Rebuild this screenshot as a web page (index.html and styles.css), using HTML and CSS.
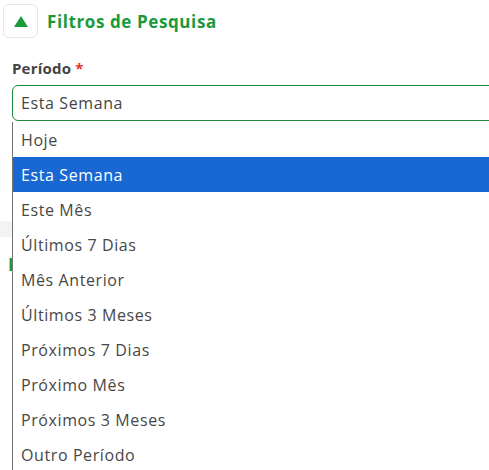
FILE: index.html
```html
<!DOCTYPE html>
<html lang="pt">
<head>
<meta charset="utf-8">
<link rel="stylesheet" href="styles.css">
</head>
<body>
<div class="page">
  <div class="header">
    <button class="toggle" type="button">
      <svg width="14" height="11" viewBox="0 0 14 11"><polygon points="7,0 14,11 0,11" fill="#1b9a3c"/></svg>
    </button>
    <h2 class="title">Filtros de Pesquisa</h2>
  </div>
  <div class="field">
    <label class="label">Período <span class="req">*</span></label>
    <div class="select-wrap">
      <div class="select">Esta Semana</div>
      <ul class="menu">
        <li>Hoje</li>
        <li class="active">Esta Semana</li>
        <li>Este Mês</li>
        <li>Últimos 7 Dias</li>
        <li>Mês Anterior</li>
        <li>Últimos 3 Meses</li>
        <li>Próximos 7 Dias</li>
        <li>Próximo Mês</li>
        <li>Próximos 3 Meses</li>
        <li>Outro Período</li>
      </ul>
    </div>
  </div>
  <div class="band"></div>
  <h2 class="results">Resultados</h2>
</div>
</body>
</html>
```
FILE: styles.css
```css
html {
  overflow: hidden;
}
html, body {
  margin: 0;
  padding: 0;
  background: #fff;
}
body {
  font-family: "Open Sans", "DejaVu Sans", sans-serif;
  color: #444;
  min-height: 470px;
}
.page {
  width: 540px;
  padding-top: 4px;
}
.header {
  display: flex;
  align-items: center;
  gap: 9px;
  padding-left: 3px;
}
.toggle {
  width: 35px;
  height: 34px;
  border: 1px solid #e6e6e6;
  border-radius: 6px;
  background: #fff;
  display: flex;
  align-items: center;
  justify-content: center;
  padding: 0;
  margin: 0;
}
.title {
  margin: 0;
  font-size: 17px;
  font-weight: 700;
  letter-spacing: 0.6px;
  color: #1b9a3c;
}
.field {
  padding-left: 12px;
  margin-top: 20px;
}
.label {
  display: block;
  font-size: 15px;
  font-weight: 700;
  color: #444;
  height: 27px;
  letter-spacing: 0.2px;
}
.req {
  color: #e8342a;
}
.select-wrap {
  position: relative;
}
.select {
  height: 34px;
  border: 1px solid #1f8a3a;
  border-radius: 6px;
  padding-left: 8px;
  font-size: 16px;
  letter-spacing: 0.6px;
  line-height: 34px;
  color: #444;
}
.menu {
  position: absolute;
  left: 0;
  top: 37px;
  right: 0;
  margin: 0;
  padding: 0;
  list-style: none;
  background: #fff;
  border-left: 1px solid #767676;
  z-index: 2;
}
.menu li {
  height: 35px;
  line-height: 36px;
  padding-left: 8px;
  font-size: 16px;
  letter-spacing: 0.6px;
  color: #474747;
}
.menu li.active {
  background: #1967d2;
  color: #fff;
}
.band {
  height: 16px;
  background: #f3f3f3;
  margin-top: 100px;
}
.results {
  margin: 16px 0 0 8px;
  font-size: 17px;
  font-weight: 700;
  color: #1b9a3c;
}
```
